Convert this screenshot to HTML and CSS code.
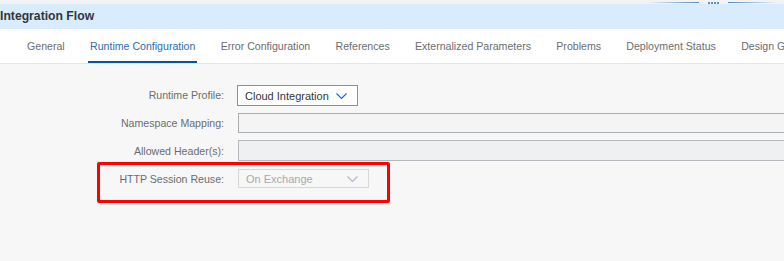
FILE: index.html
```html
<!DOCTYPE html>
<html lang="en">
<head>
  <meta charset="UTF-8" />
  <title>Integration Flow | Runtime Configuration</title>
  <link rel="stylesheet" href="styles.css">
</head>
<body>
  <div class="top-strip">
    <div class="handle">
      <span class="line left"></span>
      <span class="dots"><i></i><i></i><i></i><i></i></span>
      <span class="line right"></span>
    </div>
  </div>

  <div class="title-bar">Integration Flow</div>

  <ul class="tabs">
    <li>General</li>
    <li class="active">Runtime Configuration</li>
    <li>Error Configuration</li>
    <li>References</li>
    <li>Externalized Parameters</li>
    <li>Problems</li>
    <li>Deployment Status</li>
    <li>Design Guidelines</li>
  </ul>

  <div class="content">
    <div class="form">
      <label>Runtime Profile:</label>
      <div class="select">
        <span>Cloud Integration</span>
        <svg width="11" height="6" viewBox="0 0 11 6"><path d="M0.5 0.5l5 5 5-5" fill="none" stroke="currentColor" stroke-width="1.1"/></svg>
      </div>

      <label>Namespace Mapping:</label>
      <div class="field"></div>

      <label>Allowed Header(s):</label>
      <div class="field readonly"></div>

      <label>HTTP Session Reuse:</label>
      <div class="select disabled">
        <span>On Exchange</span>
        <svg width="11" height="6" viewBox="0 0 11 6"><path d="M0.5 0.5l5 5 5-5" fill="none" stroke="currentColor" stroke-width="1.1"/></svg>
      </div>

      <div class="highlight"></div>
    </div>
  </div>
</body>
</html>
```

FILE: styles.css
```css
:root {
  --text: #32363a;
  --label: #6a6d70;
  --blue: #0a6ed1;
  --shell: #d8ecfd;
  --bg: #f7f7f7;
}
* {
  margin: 0;
  padding: 0;
  box-sizing: border-box;
}
body {
  font-family: "Liberation Sans", Arial, sans-serif;
  font-size: 10.6px;
  color: var(--text);
  background: var(--bg);
  overflow: hidden;
  width: 784px;
  height: 261px;
}
.top-strip {
  height: 4px;
  background: #f2f3f4;
  display: flex;
  justify-content: flex-end;
  padding-right: 6px;
}
.handle {
  display: flex;
  align-items: center;
  gap: 5px;
  height: 4px;
}
.handle .line {
  width: 52px;
  height: 1px;
  margin-top: 1px;
}
.handle .line.left {
  background: linear-gradient(to right, rgba(79, 136, 198, 0), #4f88c6);
}
.handle .line.right {
  width: 50px;
  background: linear-gradient(to right, #4f88c6, rgba(79, 136, 198, 0));
}
.handle .dots {
  display: flex;
  gap: 1px;
  margin: 1px 4px 0;
}
.handle .dots i {
  width: 2px;
  height: 2px;
  background: #5b8fc7;
}
.title-bar {
  height: 25px;
  line-height: 25px;
  background: var(--shell);
  font-size: 12.2px;
  font-weight: 700;
  color: var(--text);
  white-space: nowrap;
}
.tabs {
  list-style: none;
  display: flex;
  gap: 21.3px;
  height: 35px;
  padding-left: 25px;
  background: #fff;
  border-bottom: 1px solid #e5e5e5;
  white-space: nowrap;
}
.tabs li {
  display: flex;
  align-items: center;
  padding: 2px 2px 0;
  color: var(--label);
  border-bottom: 2px solid transparent;
}
.tabs li.active {
  color: #2b6cb4;
  border-bottom-color: #0854a0;
}
.content {
  padding-top: 21px;
}
.form {
  position: relative;
  display: grid;
  grid-template-columns: 224px 1fr;
  column-gap: 13px;
  row-gap: 8px;
  grid-auto-rows: 20px;
}
.form label {
  display: flex;
  align-items: center;
  justify-content: flex-end;
  color: var(--label);
  white-space: nowrap;
}
.select {
  width: 121px;
  height: 21px;
  display: flex;
  align-items: center;
  justify-content: space-between;
  padding: 0 10px 0 7px;
  background: #fff;
  border: 1px solid #89919a;
  color: var(--text);
  font-size: 11px;
}
.select svg {
  color: var(--blue);
  margin-top: 1px;
}
.select.disabled {
  width: 131px;
  height: 19px;
  margin-left: 1px;
  background: #f7f7f7;
  border-color: #d5d8da;
  color: #a7a9ab;
}
.select.disabled svg {
  color: #a9bad0;
}
.field {
  width: 600px;
  height: 20px;
  margin-left: 1px;
  background: #f4f4f4;
  border: 1px solid #a9aeb3;
  border-right: none;
}
.field.readonly {
  height: 21px;
  margin-top: -1px;
  background: #eef0f1;
  border-color: #b5b9bd;
}
.highlight {
  position: absolute;
  left: 97px;
  top: 77px;
  width: 293px;
  height: 41px;
  border: 3px solid #ff0000;
  border-radius: 2px;
  pointer-events: none;
}
```
